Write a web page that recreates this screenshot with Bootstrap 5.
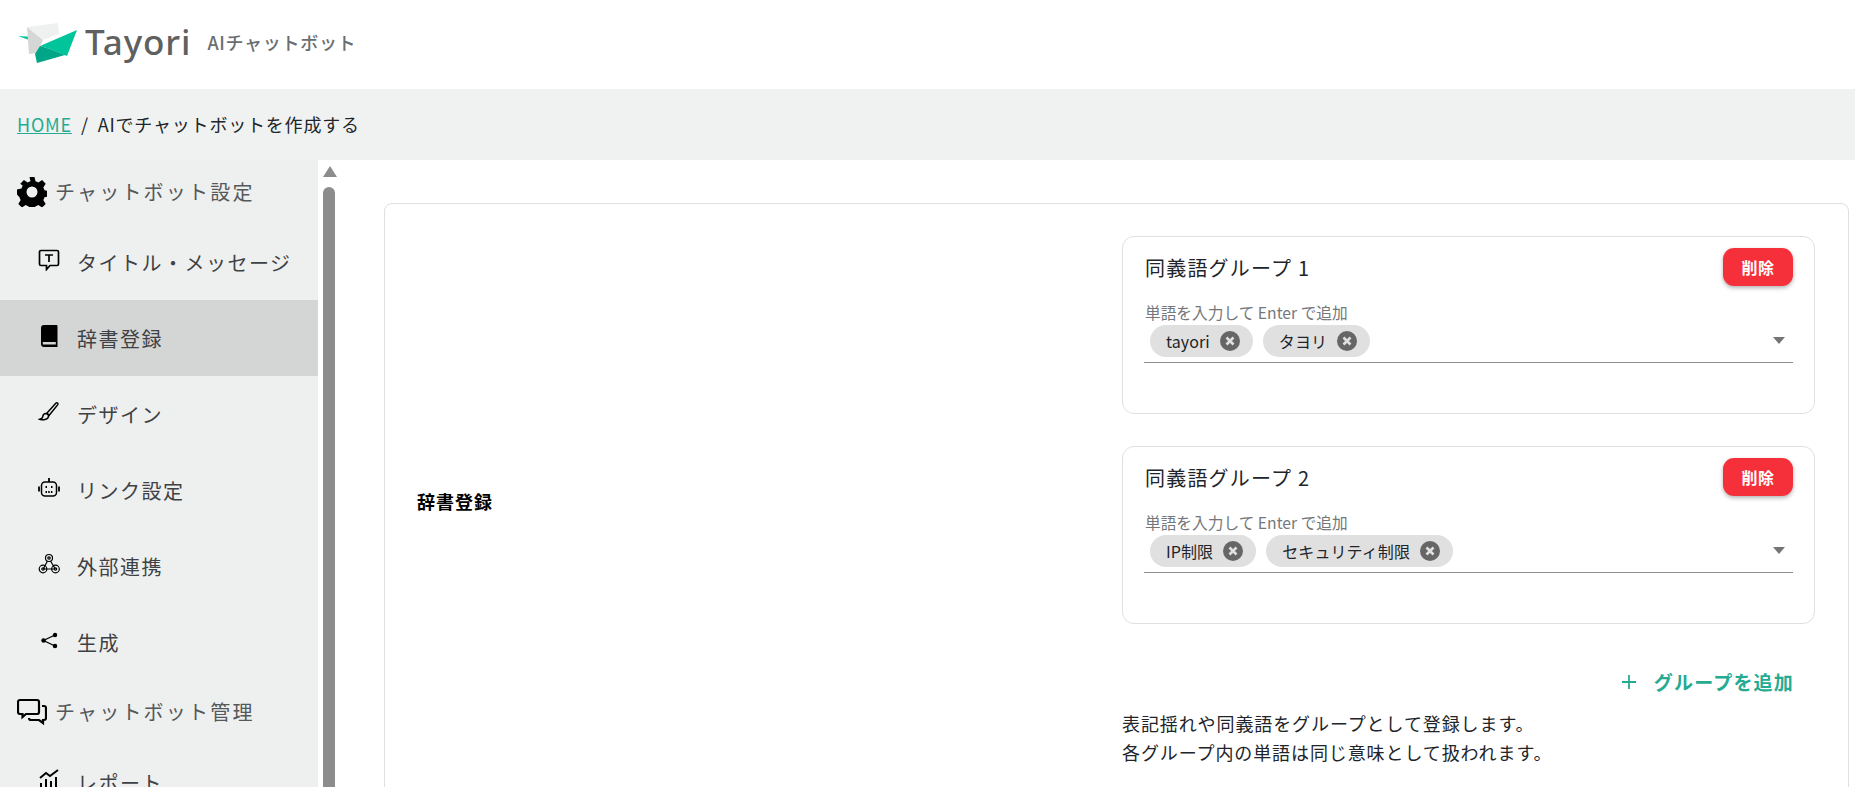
<!DOCTYPE html>
<html lang="ja"><head><meta charset="utf-8"><title>Tayori</title>
<link href="https://cdn.jsdelivr.net/npm/bootstrap@5.3.0/dist/css/bootstrap.min.css" rel="stylesheet">
<style>
html,body{height:787px;overflow:hidden}
body{font-family:"Noto Sans CJK JP","Noto Sans",sans-serif;color:#212529;background:#fff}
.top-head{height:89px;padding-left:18px}
.logo-word{font-family:"Noto Sans",sans-serif;font-size:35px;font-weight:500;color:#5f6060;letter-spacing:.9px;line-height:1;margin-left:7px;margin-top:-6px}
.logo-sub{font-size:18px;font-weight:500;color:#6b6e70;margin-left:16px;letter-spacing:.7px;margin-top:-4px}
.crumb-bar{height:71px;background:#f0f2f2;padding-left:17px;font-size:18px;letter-spacing:.8px}
.crumb-bar a{color:#26ab93}
.crumb-sep{margin:0 9px}
.body-row{height:627px;overflow:hidden}
.side{width:318px;background:#eef0f0;flex:none;overflow:hidden}
.side-sec{height:64px;padding-left:17px;font-size:20px;letter-spacing:2.2px;color:#55585a}
.side-sec svg{margin-right:8px;flex:none}
.side-item{height:76px;padding:1px 0 0 38px;font-size:20px;letter-spacing:1.5px;color:#3f4244}
.side-item svg{margin:-5px 17px 0 0;flex:none;width:22px;height:22px}
.side-item.on{background:#d4d6d5}
.sbar{width:22px;flex:none;background:#fff;padding:6px 4px 0 5px}
.sbar-up{width:0;height:0;border-left:7.5px solid transparent;border-right:7.5px solid transparent;border-bottom:11px solid #8c8c8c;margin:0 auto 10px}
.sbar-thumb{height:630px;background:#8c8c8c;border-radius:7px;margin-right:1px}
.main-area{padding:43px 0 0 44px;min-width:0}
.outer-box{width:1465px;height:800px;border:1px solid #e0e0e0;border-radius:8px 8px 0 0;padding:0 27px 0 33px}
.lbl-col{width:705px;flex:none;font-weight:700;font-size:18px;color:#000;padding-top:285px;line-height:24px;margin-left:-1px;letter-spacing:1px}
.grp-col{width:693px;flex:none;padding-top:32px}
.grp-box{height:178px;border:1px solid #e0e0e0;border-radius:12px;padding:11px 21px 0 22px;margin-bottom:32px}
.grp-title{font-size:20px;letter-spacing:1.2px;height:40px;color:#212529}
.del-btn{width:70px;height:38px;background:#f5303a;color:#fff;border:0;border-radius:11px;font-size:16px;font-weight:700;letter-spacing:.6px;padding:0;box-shadow:0 2px 4px rgba(0,0,0,.3)}
.fld-lbl{font-size:15.7px;color:#75787a;line-height:20px;margin-top:15px;height:20px}
.fld-row{height:40px;border-bottom:1px solid #8f8f8f;padding:0 8px 0 6px;margin-left:-1px}
.tag{height:32px;background:#e0e0e0;border-radius:16px;padding:0 13px 0 16px;font-size:16px;margin-right:10px;color:#212529;margin-bottom:4px;letter-spacing:.1px}
.tag svg{margin-left:10px}
.caret{width:0;height:0;border-left:6.5px solid transparent;border-right:6.5px solid transparent;border-top:7px solid #757575;margin-left:auto;margin-bottom:4px}
.add-line{color:#26ab93;font-weight:700;font-size:19px;letter-spacing:1.2px;height:48px;padding-top:4px}
.add-line svg{margin-right:17px}
.add-txt{margin-right:21px}
.note{font-size:18px;line-height:28.5px;letter-spacing:.9px;margin-top:5px}
</style></head><body>
<header class="top-head d-flex align-items-center">
<svg width="60" height="44" viewBox="0 0 60 44" aria-hidden="true"><polygon points="0,13 18,14 24,20 14,18" fill="#00c49a"/><polygon points="9,4 25,17 22,23 19,30 11,31" fill="#d5d6d6"/><polygon points="9,4 40,0 41,11 25,17" fill="#eff0f0"/><polygon points="59,7 22,23 32,26 49,33" fill="#00c49a"/><polygon points="22,23 17,31 19,40 47,32 32,26" fill="#00a687"/></svg>
<span class="logo-word">Tayori</span><span class="logo-sub">AIチャットボット</span>
</header>
<nav class="crumb-bar d-flex align-items-center"><a href="#">HOME</a><span class="crumb-sep">/</span><span>AIでチャットボットを作成する</span></nav>
<div class="body-row d-flex">
<aside class="side">
<div class="side-sec d-flex align-items-center"><svg width="30" height="30" viewBox="0 0 30 30"><path fill="#000" fill-rule="evenodd" d="M12.500 0h5l1 4.300a11 11 0 0 1 2.800 1.200l3.800-2.400 3.600 3.600-2.400 3.800c.5.900.9 1.800 1.200 2.800l4.500 1v5l-4.500 1a11 11 0 0 1-1.200 2.800l2.400 3.800-3.600 3.600-3.800-2.400a11 11 0 0 1-2.800 1.200l-1 4.300h-5l-1-4.300a11 11 0 0 1-2.800-1.200l-3.800 2.400-3.600-3.600 2.400-3.800a11 11 0 0 1-1.200-2.800L0 17.500v-5l4.500-1c.3-1 .7-1.900 1.200-2.800L3.300 6.700l3.600-3.600 3.800 2.400a11 11 0 0 1 2.800-1.200zM15 9.500a5.500 5.500 0 1 0 0 11 5.500 5.500 0 0 0 0-11z"/></svg>チャットボット設定</div>
<div class="side-item d-flex align-items-center"><svg viewBox="0 0 22 22" fill="none" stroke="#000" stroke-width="1.700"><path d="M3 1.500h16a1.500 1.500 0 0 1 1.500 1.500v12a1.500 1.500 0 0 1-1.500 1.500h-7L8.500 20.500v-4H3A1.500 1.500 0 0 1 1.500 15V3A1.500 1.500 0 0 1 3 1.500z"/><path d="M7 6h8M11 6v7"/></svg>タイトル・メッセージ</div>
<div class="side-item on d-flex align-items-center"><svg viewBox="0 0 22 22"><path fill="#000" d="M6 0h12.500a1 1 0 0 1 1 1v21H6a3 3 0 0 1-3-3V3a3 3 0 0 1 3-3z"/><rect x="4.800" y="17" width="13" height="2.500" fill="#d4d6d5"/></svg>辞書登録</div>
<div class="side-item d-flex align-items-center"><svg viewBox="0 0 22 22" fill="none" stroke="#000" stroke-width="1.500"><path d="M9 12 18 2c1-.8 2.500.5 1.800 1.600L11 14.500z"/><path d="M8 12.500c-2 0-3 1.200-3.200 3-.2 1.500-1 2.300-3 2.800 3 1 8 .8 8.700-3 .2-1-.6-2.600-2.500-2.800z"/></svg>デザイン</div>
<div class="side-item d-flex align-items-center"><svg viewBox="0 0 22 22" fill="none" stroke="#000" stroke-width="1.500"><rect x="3.500" y="5" width="15" height="14" rx="3.500"/><path d="M11 5V1M1 9.500v5M21 9.500v5" stroke-width="1.800"/><path d="M7.500 10h1.500M13 10h1.500M7.500 15h7" stroke-width="2" stroke-dasharray="1.500 1.200"/></svg>リンク設定</div>
<div class="side-item d-flex align-items-center"><svg viewBox="0 0 22 22" fill="none" stroke="#000" stroke-width="1.200"><circle cx="11" cy="5" r="3.500"/><circle cx="5" cy="16" r="3.800"/><circle cx="17.500" cy="16" r="3.800"/><circle cx="11" cy="5" r="1.200"/><circle cx="5" cy="16" r="1.200"/><circle cx="17.500" cy="16" r="1.200"/><path d="M9.500 8 5.500 15.500M12.500 8l4.500 7.500M5 16h12.500"/></svg>外部連携</div>
<div class="side-item d-flex align-items-center"><svg viewBox="0 0 22 22" fill="#000" stroke="#000" stroke-width="1.300"><circle cx="17" cy="6" r="1.600"/><circle cx="5.500" cy="11.500" r="1.600"/><circle cx="17" cy="17" r="1.600"/><path d="M17 6 5.500 11.500 17 17" fill="none"/></svg>生成</div>
<div class="side-sec d-flex align-items-center"><svg width="30" height="30" viewBox="0 0 30 30" fill="none" stroke="#000" stroke-width="2.200"><path d="M3 3h17a2 2 0 0 1 2 2v10a2 2 0 0 1-2 2H9l-3.500 3v-3H3a2 2 0 0 1-2-2V5a2 2 0 0 1 2-2z"/><path d="M25 9h2a2 2 0 0 1 2 2v10a2 2 0 0 1-2 2h-1v3l-4-3h-8a2 2 0 0 1-2-2"/></svg>チャットボット管理</div>
<div class="side-item d-flex align-items-center"><svg viewBox="0 0 22 22" fill="none" stroke="#000" stroke-width="2"><path d="M2 9 8 4l4 3 8-6M3 21v-7M8 21V10M13 21v-9M18 21V8"/></svg>レポート</div>
</aside>
<div class="sbar"><div class="sbar-up"></div><div class="sbar-thumb"></div></div>
<main class="main-area flex-grow-1">
<div class="outer-box d-flex">
<div class="lbl-col">辞書登録</div>
<div class="grp-col">
<div class="grp-box">
<div class="d-flex justify-content-between align-items-start"><div class="grp-title d-flex align-items-center">同義語グループ 1</div><button class="del-btn" type="button">削除</button></div>
<div class="fld-lbl">単語を入力して Enter で追加</div>
<div class="fld-row d-flex align-items-center"><span class="tag d-inline-flex align-items-center">tayori<svg width="20" height="20" viewBox="0 0 20 20"><circle cx="10" cy="10" r="10" fill="#666"/><path d="M6.500 6.500l7 7M13.500 6.500l-7 7" stroke="#e0e0e0" stroke-width="2.600"/></svg></span><span class="tag d-inline-flex align-items-center">タヨリ<svg width="20" height="20" viewBox="0 0 20 20"><circle cx="10" cy="10" r="10" fill="#666"/><path d="M6.500 6.500l7 7M13.500 6.500l-7 7" stroke="#e0e0e0" stroke-width="2.600"/></svg></span><span class="caret"></span></div>
</div>
<div class="grp-box">
<div class="d-flex justify-content-between align-items-start"><div class="grp-title d-flex align-items-center">同義語グループ 2</div><button class="del-btn" type="button">削除</button></div>
<div class="fld-lbl">単語を入力して Enter で追加</div>
<div class="fld-row d-flex align-items-center"><span class="tag d-inline-flex align-items-center">IP制限<svg width="20" height="20" viewBox="0 0 20 20"><circle cx="10" cy="10" r="10" fill="#666"/><path d="M6.500 6.500l7 7M13.500 6.500l-7 7" stroke="#e0e0e0" stroke-width="2.600"/></svg></span><span class="tag d-inline-flex align-items-center">セキュリティ制限<svg width="20" height="20" viewBox="0 0 20 20"><circle cx="10" cy="10" r="10" fill="#666"/><path d="M6.500 6.500l7 7M13.500 6.500l-7 7" stroke="#e0e0e0" stroke-width="2.600"/></svg></span><span class="caret"></span></div>
</div>
<div class="add-line d-flex align-items-center justify-content-end"><svg width="16" height="16" viewBox="0 0 16 16"><path d="M8 1v14M1 8h14" stroke="#26ab93" stroke-width="1.800"/></svg><span class="add-txt">グループを追加</span></div>
<div class="note">表記揺れや同義語をグループとして登録します。<br>各グループ内の単語は同じ意味として扱われます。</div>
</div>
</div>
</main>
</div>
<script src="https://cdn.jsdelivr.net/npm/bootstrap@5.3.0/dist/js/bootstrap.bundle.min.js"></script>
</body></html>
